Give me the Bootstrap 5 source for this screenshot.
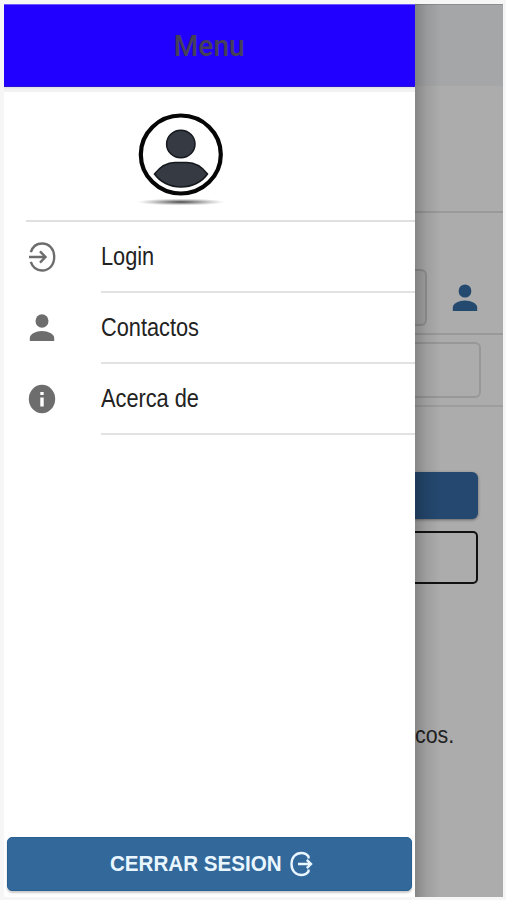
<!DOCTYPE html>
<html lang="es">
<head>
<meta charset="utf-8">
<meta name="viewport" content="width=device-width, initial-scale=1">
<title>Menu</title>
<link href="https://cdn.jsdelivr.net/npm/bootstrap@5.3.0/dist/css/bootstrap.min.css" rel="stylesheet">
<style>
body{background:#f6f6f6;font-family:"Liberation Sans",Arial,sans-serif;height:900px;overflow:hidden;padding:4px 3px 3px 4px}
.frame{height:893px}
.drawer{width:411px;background:#fff;z-index:2}
.bar{height:83px;background:#2200ff;border-top:1px solid #6b58ff;border-bottom:1px solid #2a12cf;color:#454058;font:500 29.5px/82px Roboto,sans-serif}
.bar-shade{height:5px;background:linear-gradient(#dedeea,#f0f0f0 40%,#f3f3f3)}
.profile{height:130px;margin-left:22px;border-bottom:2px solid #e0e0e0;padding:16px 0 0 105px}
.entry{height:71px;color:#222;font-size:25px;padding-left:22px}
.entry svg{width:32px;height:32px;margin-bottom:2px;color:#6d6d6d}
.entry-label{margin-left:43px;border-bottom:2px solid #e2e2e2;height:71px;line-height:69px}
.squeeze{display:inline-block;transform:scaleX(.87);transform-origin:left}
.menu-title{display:inline-block;transform:scaleX(.95)}
.logout{height:54px;margin:0 3px 6px;background:#33689a;border:1px solid #295f91;border-radius:5px;color:#eaf6ff;font-weight:700;font-size:21.5px;box-shadow:0 2px 2px #ccc}
.logout span{width:174px;white-space:nowrap}
.logout span b{display:inline-block;transform:scaleX(.958);transform-origin:left}
.logout-inner{padding-left:4px}
.dimmed{background:#acacac;overflow:hidden}
.dimmed::before{content:"";position:absolute;inset:0 auto 0 0;width:26px;background:linear-gradient(90deg,rgba(0,0,0,.22),rgba(0,0,0,.08) 45%,transparent);z-index:2}
.page-head{height:82px;background:#a5a6a8;border-top:1px solid #8e8e8e}
.page-banner{height:127px;border-bottom:2px solid #999}
.user-row{height:122px;border-bottom:2px solid #999}
.user-field{width:12px;height:57px;margin-top:56px;border:2px solid #929292;border-left:0;border-radius:0 6px 6px 0;background:#a6a6a6}
.user-row svg{width:32px;height:34px;margin:68px 0 0 22px;color:#254a70}
.pass-row{height:72px;border-bottom:2px solid #9d9d9d;padding-top:7px}
.pass-field{width:66px;height:56px;border:2px solid #989898;border-left:0;border-radius:0 6px 6px 0}
.enter{width:63px;height:47px;margin-top:65px;background:#24486f;border-radius:0 6px 6px 0;box-shadow:0 1px 3px #666}
.outline{width:63px;height:53px;margin-top:12px;border:2px solid #111;border-left:0;border-radius:0 5px 5px 0}
.note{margin-top:139px;height:24px;font-size:23px;line-height:24px;color:#222}
.note span{display:inline-block;transform:scaleX(.93);transform-origin:left}
</style>
</head>
<body>
<div class="frame d-flex">
  <aside class="drawer d-flex flex-column flex-shrink-0">
    <header class="bar text-center"><span class="menu-title">Menu</span></header>
    <div class="bar-shade"></div>
    <div class="profile">
      <svg class="d-block" width="100" height="104" viewBox="0 0 100 104">
        <defs><radialGradient id="ground"><stop offset="0" stop-color="#444"/><stop offset=".45" stop-color="#888" stop-opacity=".75"/><stop offset="1" stop-color="#aaa" stop-opacity="0"/></radialGradient></defs>
        <ellipse cx="50" cy="94" rx="44" ry="3.5" fill="url(#ground)"/>
        <ellipse cx="49.8" cy="46.500" rx="40" ry="39" fill="#fff" stroke="#060606" stroke-width="4.200"/>
        <ellipse cx="49.8" cy="36" rx="14.2" ry="13.8" fill="#353a43" stroke="#15181c" stroke-width="1.500"/>
        <path d="M23.500 66C30 57.500 37 54.500 44 54.500H56C63 54.500 70 57.500 76.500 66C71 74 61 79 50 79S29 74 23.500 66Z" fill="#353a43" stroke="#15181c" stroke-width="1.500"/>
      </svg>
    </div>
    <nav>
      <div class="entry d-flex align-items-center">
        <svg viewBox="0 0 32 32" fill="none" stroke="currentColor" stroke-width="2.400"><path d="M4.800 11.100C6.700 5.500 11 2.500 16 2.500C23.300 2.500 28.200 8 28.200 16S23.300 29.500 16 29.500C11 29.500 6.700 26.500 4.800 20.900M3 16H19M14 10.300L19.500 16L14 21.700"/></svg>
        <div class="entry-label flex-grow-1"><span class="squeeze">Login</span></div>
      </div>
      <div class="entry d-flex align-items-center">
        <svg viewBox="0 0 32 32" fill="currentColor"><ellipse cx="16" cy="9" rx="6.500" ry="6.800"/><path d="M3.800 29V26C3.800 22 10 19 16 19S28.200 22 28.200 26V29Z"/></svg>
        <div class="entry-label flex-grow-1"><span class="squeeze">Contactos</span></div>
      </div>
      <div class="entry d-flex align-items-center">
        <svg viewBox="0 0 32 32"><ellipse cx="16" cy="16" rx="13.200" ry="14.300" fill="currentColor"/><path d="M14.300 9H17.700V12H14.300ZM14.300 14.500H17.700V23.500H14.300Z" fill="#fff"/></svg>
        <div class="entry-label flex-grow-1"><span class="squeeze">Acerca de</span></div>
      </div>
    </nav>
    <button class="logout btn p-0 mt-auto" type="button">
      <div class="logout-inner d-flex align-items-center justify-content-center">
        <span class="text-start"><b>CERRAR SESION</b></span>
        <svg class="ms-1" width="26" height="26" viewBox="0 0 26 26" fill="none" stroke="currentColor" stroke-width="2.400"><path d="M20.500 7.500V5.500C18.700 3 16.200 2 13.500 2C7.500 2 3.500 6.500 3.500 13S7.500 24 13.500 24C16.200 24 18.700 23 20.500 20.500V18.500M10 13H23M18.800 8.800L23 13L18.800 17.200"/></svg>
      </div>
    </button>
  </aside>
  <main class="dimmed position-relative flex-grow-1">
    <div class="page-head"></div>
    <div class="page-banner"></div>
    <div class="user-row d-flex align-items-start">
      <div class="user-field"></div>
      <svg viewBox="0 0 32 32" fill="currentColor"><ellipse cx="16" cy="9" rx="6.400" ry="6.600"/><path d="M3.800 29V25.500C3.800 21.500 10 18.500 16 18.500S28.200 21.500 28.200 25.500V29Z"/></svg>
    </div>
    <div class="pass-row"><div class="pass-field"></div></div>
    <div class="enter"></div>
    <div class="outline"></div>
    <div class="note"><span>cos.</span></div>
  </main>
</div>
<script src="https://cdn.jsdelivr.net/npm/bootstrap@5.3.0/dist/js/bootstrap.bundle.min.js"></script>
</body>
</html>
